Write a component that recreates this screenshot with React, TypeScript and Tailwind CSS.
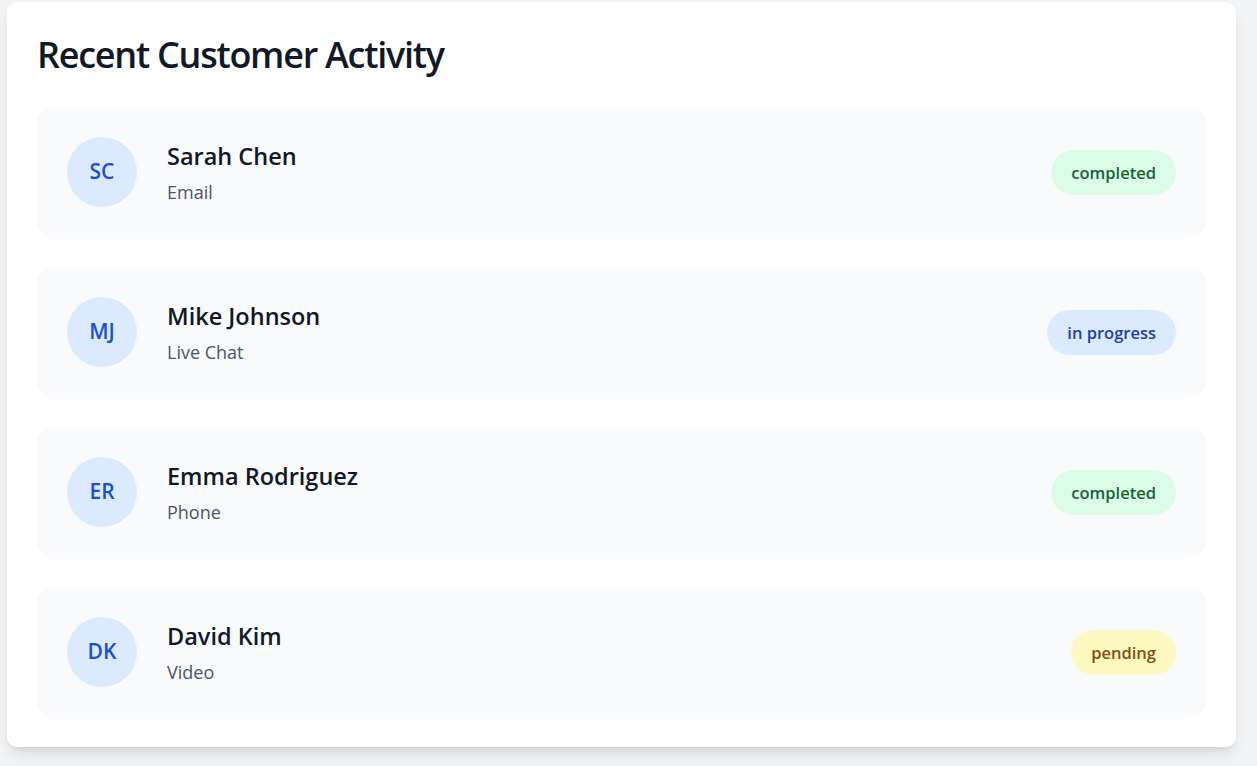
const activities = [
  { initials: "SC", name: "Sarah Chen", channel: "Email", status: "completed" },
  { initials: "MJ", name: "Mike Johnson", channel: "Live Chat", status: "in progress" },
  { initials: "ER", name: "Emma Rodriguez", channel: "Phone", status: "completed" },
  { initials: "DK", name: "David Kim", channel: "Video", status: "pending" },
];

const statusStyles: Record<string, string> = {
  completed: "bg-[#dcfce7] text-[#166534]",
  "in progress": "bg-[#dbeafe] text-[#1e40af]",
  pending: "bg-[#fef9c3] text-[#854d0e]",
};

export default function App() {
  return (
    <div
      className="min-h-screen bg-[#f3f4f6] pl-[7px] pr-[21px] pt-[2px] pb-5"
      style={{ fontFamily: '"Open Sans", "Noto Sans", sans-serif' }}
    >
      <div className="rounded-[10px] bg-white p-[30px] shadow-lg">
        <h2 className="mb-[30px] text-[36px] leading-[45px] font-semibold tracking-[-0.035em] text-[#111827]">
          Recent Customer Activity
        </h2>
        <div className="flex flex-col gap-[30px]">
          {activities.map((a) => (
            <div
              key={a.name}
              className="flex items-center justify-between rounded-[15px] bg-[#f9fafb] p-[30px]"
            >
              <div className="flex items-center gap-[30px]">
                <div className="flex h-[70px] w-[70px] items-center justify-center rounded-full bg-[#dbeafe] text-[21px] font-semibold text-[#1d4ed8]">
                  {a.initials}
                </div>
                <div>
                  <div className="text-[23.5px] leading-[35px] font-semibold text-[#111827]">
                    {a.name}
                  </div>
                  <div className="mt-[6px] text-[18px] leading-[25px] text-[#4b5563]">
                    {a.channel}
                  </div>
                </div>
              </div>
              <span
                className={`rounded-full px-5 py-[10px] text-[16.5px] leading-[25px] font-semibold ${statusStyles[a.status]}`}
              >
                {a.status}
              </span>
            </div>
          ))}
        </div>
      </div>
    </div>
  );
}
